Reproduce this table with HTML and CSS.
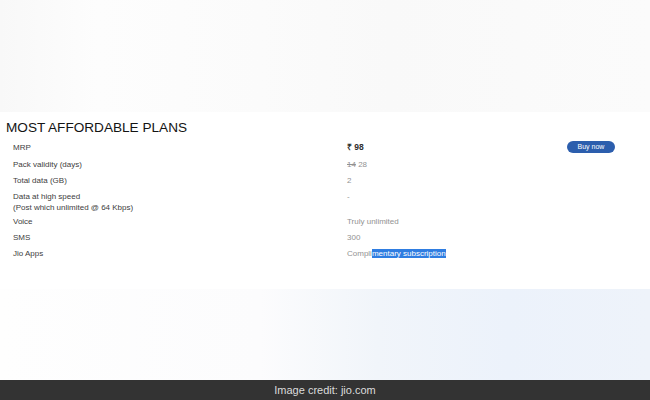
FILE: index.html
```html
<!DOCTYPE html>
<html lang="en">
<head>
<meta charset="utf-8">
<title>Most affordable plans</title>
<link rel="stylesheet" href="styles.css">
</head>
<body>
<div class="page">
  <div class="hero"></div>
  <section class="plans">
    <h2 class="plans-title">MOST AFFORDABLE PLANS</h2>
    <div class="plan-table">
      <div class="row row-first">
        <div class="label">MRP</div>
        <div class="value price">₹ 98</div>
        <div class="action"><button class="buy-btn">Buy now</button></div>
      </div>
      <div class="row">
        <div class="label">Pack validity (days)</div>
        <div class="value"><span class="old">14</span> 28</div>
      </div>
      <div class="row">
        <div class="label">Total data (GB)</div>
        <div class="value">2</div>
      </div>
      <div class="row row-double">
        <div class="label">Data at high speed<br>(Post which unlimited @ 64 Kbps)</div>
        <div class="value">-</div>
      </div>
      <div class="row">
        <div class="label">Voice</div>
        <div class="value">Truly unlimited</div>
      </div>
      <div class="row">
        <div class="label">SMS</div>
        <div class="value">300</div>
      </div>
      <div class="row">
        <div class="label">Jio Apps</div>
        <div class="value">Compli<span class="selected">mentary subscription</span></div>
      </div>
    </div>
  </section>
  <div class="lower"></div>
  <footer class="credit">Image credit: jio.com</footer>
</div>
</body>
</html>
```
FILE: styles.css
```css
html, body {
  margin: 0;
  padding: 0;
}
body {
  width: 650px;
  height: 400px;
  overflow: hidden;
  font-family: "Liberation Sans", Arial, sans-serif;
  background: #ffffff;
}
.page {
  display: flex;
  flex-direction: column;
  height: 400px;
}
.hero {
  height: 112px;
  background: linear-gradient(90deg, #f8f8f8 0%, #fdfdfd 15%, #fbfbfb 40%, #f9f9f9 60%, #fbfbfb 100%);
}
.plans {
  height: 177px;
  box-sizing: border-box;
  background: #ffffff;
  padding-top: 6px;
}
.plans-title {
  margin: 0 0 0 6px;
  font-size: 13.6px;
  line-height: 20px;
  font-weight: normal;
  color: #141414;
}
.plan-table {
  display: flex;
  flex-direction: column;
}
.row {
  display: grid;
  grid-template-columns: 334px 220px 48px;
  padding-left: 13px;
  height: 16px;
  align-items: center;
  font-size: 8px;
  line-height: 11px;
}
.row-first {
  height: 18px;
}
.row-double {
  height: 25px;
  align-items: start;
  padding-top: 3px;
  box-sizing: border-box;
}
.label {
  color: #404040;
}
.value {
  color: #929292;
}
.price {
  color: #2e2e2e;
  font-size: 8.5px;
  font-weight: bold;
}
.old {
  text-decoration: line-through;
}
.selected {
  background: #2f7de1;
  color: #ffffff;
}
.action {
  display: flex;
}
.buy-btn {
  width: 48px;
  height: 12px;
  padding: 0;
  border: none;
  border-radius: 6px;
  background: #2c5ead;
  color: #ffffff;
  font-family: "Liberation Sans", Arial, sans-serif;
  font-size: 7px;
  line-height: 12px;
}
.lower {
  height: 91px;
  background: linear-gradient(90deg, #fefefe 0%, #fcfcfd 40%, #f1f5fa 58%, #ecf2fb 78%, #eef3fa 100%);
}
.credit {
  height: 20px;
  background: #333333;
  color: #dcdcdc;
  font-size: 11px;
  line-height: 20px;
  text-align: center;
}
```
